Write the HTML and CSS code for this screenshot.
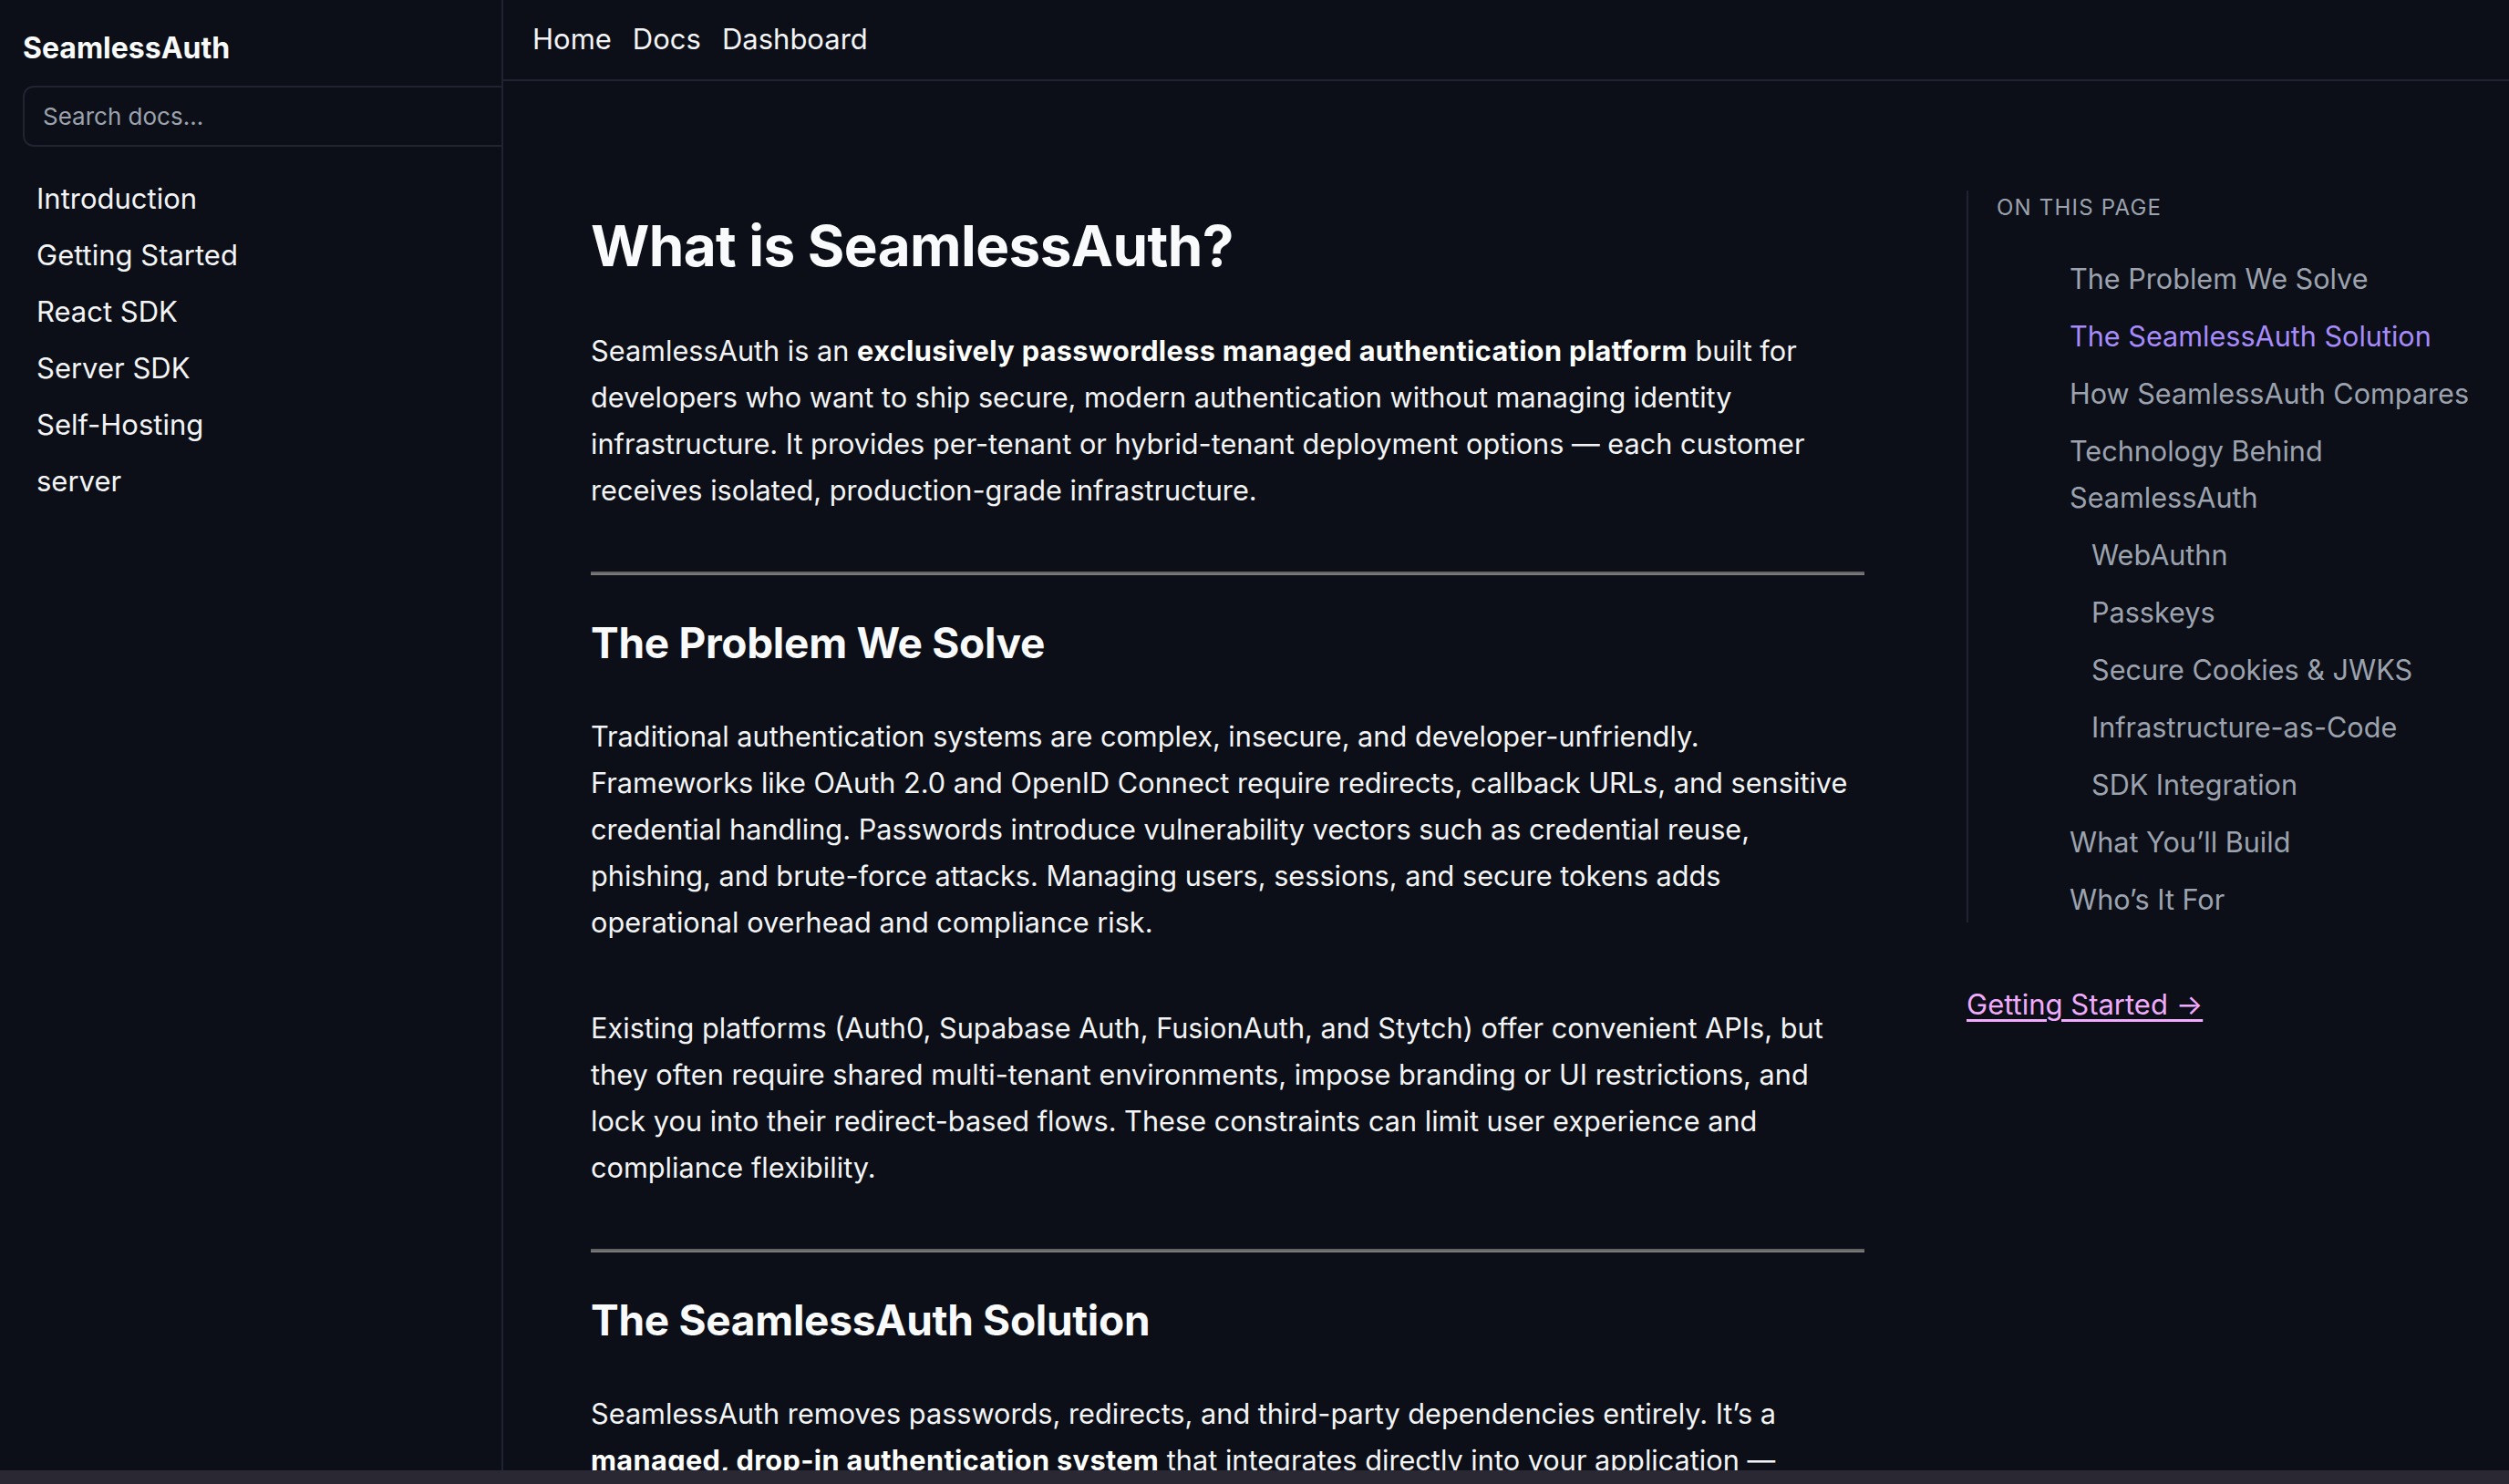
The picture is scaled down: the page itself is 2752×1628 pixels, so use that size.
FILE: index.html
```html
<!DOCTYPE html>
<html lang="en">
<head>
<meta charset="utf-8">
<title>What is SeamlessAuth? – Docs</title>
<link rel="stylesheet" href="styles.css">
</head>
<body>
<div class="app">
  <aside class="sidebar">
    <div class="brand">SeamlessAuth</div>
    <input class="search" type="text" placeholder="Search docs...">
    <nav class="side-nav">
      <a href="#">Introduction</a>
      <a href="#">Getting Started</a>
      <a href="#">React SDK</a>
      <a href="#">Server SDK</a>
      <a href="#">Self-Hosting</a>
      <a href="#">server</a>
    </nav>
  </aside>
  <div class="main">
    <header class="topbar">
      <a href="#">Home</a>
      <a href="#">Docs</a>
      <a href="#">Dashboard</a>
    </header>
    <div class="page">
      <article class="content">
        <h1>What is SeamlessAuth?</h1>
        <p>SeamlessAuth is an <strong>exclusively passwordless managed authentication platform</strong> built for developers who want to ship secure, modern authentication without managing identity infrastructure. It provides per-tenant or hybrid-tenant deployment options — each customer receives isolated, production-grade infrastructure.</p>
        <hr>
        <h2>The Problem We Solve</h2>
        <p>Traditional authentication systems are complex, insecure, and developer-unfriendly. Frameworks like OAuth 2.0 and OpenID Connect require redirects, callback URLs, and sensitive credential handling. Passwords introduce vulnerability vectors such as credential reuse, phishing, and brute-force attacks. Managing users, sessions, and secure tokens adds operational overhead and compliance risk.</p>
        <p>Existing platforms (Auth0, Supabase Auth, FusionAuth, and Stytch) offer convenient APIs, but they often require shared multi-tenant environments, impose branding or UI restrictions, and lock you into their redirect-based flows. These constraints can limit user experience and compliance flexibility.</p>
        <hr>
        <h2>The SeamlessAuth Solution</h2>
        <p>SeamlessAuth removes passwords, redirects, and third-party dependencies entirely. It’s a <strong>managed, drop-in authentication system</strong> that integrates directly into your application — without hosted login pages, redirects, or passwords to manage.</p>
      </article>
      <aside class="toc">
        <div class="toc-box">
          <div class="toc-title">ON THIS PAGE</div>
          <ul class="toc-list">
            <li><a href="#">The Problem We Solve</a></li>
            <li><a href="#" class="active">The SeamlessAuth Solution</a></li>
            <li><a href="#">How SeamlessAuth Compares</a></li>
            <li><a href="#">Technology Behind SeamlessAuth</a></li>
            <li class="sub"><a href="#">WebAuthn</a></li>
            <li class="sub"><a href="#">Passkeys</a></li>
            <li class="sub"><a href="#">Secure Cookies &amp; JWKS</a></li>
            <li class="sub"><a href="#">Infrastructure-as-Code</a></li>
            <li class="sub"><a href="#">SDK Integration</a></li>
            <li><a href="#">What You’ll Build</a></li>
            <li><a href="#">Who’s It For</a></li>
          </ul>
        </div>
        <a href="#" class="next-link">Getting Started →</a>
      </aside>
    </div>
  </div>
</div>
<div class="hscroll"></div>
</body>
</html>
```
FILE: styles.css
```css
* { box-sizing: border-box; }
html, body {
  margin: 0;
  padding: 0;
  background: #0c0f17;
  color: #f3f4f6;
  font-family: Inter, "Noto Sans", sans-serif;
  overflow: hidden;
}
a { color: inherit; text-decoration: none; }

.app {
  display: flex;
  height: 1613px;
  overflow: hidden;
}

.sidebar {
  width: 552px;
  flex: none;
  border-right: 2px solid #1f2430;
  padding: 31px 0 0 25px;
  overflow: hidden;
}
.brand {
  font-size: 32px;
  font-weight: 700;
  line-height: 44px;
  color: #f9fafb;
}
.search {
  display: block;
  margin-top: 19px;
  width: 560px;
  height: 67px;
  background: transparent;
  border: 2px solid #1f2430;
  border-radius: 12px;
  padding: 0 20px;
  font-family: Inter, "Noto Sans", sans-serif;
  font-size: 26px;
  color: #e5e7eb;
}
.search::placeholder { color: #9ca3af; }
.side-nav {
  display: flex;
  flex-direction: column;
  margin-top: 26px;
  padding-left: 15px;
}
.side-nav a {
  font-size: 31px;
  line-height: 62px;
  color: #f3f4f6;
}

.main {
  flex: 1;
  display: flex;
  flex-direction: column;
  min-width: 0;
}
.topbar {
  height: 89px;
  flex: none;
  display: flex;
  align-items: center;
  gap: 23px;
  padding: 0 0 2px 32px;
  border-bottom: 2px solid #1f2430;
}
.topbar a {
  font-size: 31px;
  color: #f3f4f6;
}

.page {
  display: flex;
  align-items: flex-start;
  padding: 120px 0 0 96px;
}
.content {
  width: 1397px;
  flex: none;
}
.content h1 {
  margin: 0;
  padding-top: 27px;
  font-size: 62px;
  line-height: 68px;
  font-weight: 700;
  letter-spacing: -0.6px;
  color: #f9fafb;
}
.content p {
  margin: 55px 0 0;
  font-size: 30.7px;
  line-height: 51px;
}
.content p + p { margin-top: 65px; }
.content strong { font-weight: 700; color: #ffffff; letter-spacing: 0.35px; }
.content hr {
  margin: 64px 0 0;
  border: none;
  border-top: 2px solid #636363;
  border-bottom: 2px solid #7a7a7a;
  height: 0;
}
.content h2 {
  margin: 45px 0 0;
  font-size: 46px;
  line-height: 58px;
  font-weight: 700;
  letter-spacing: -0.3px;
  color: #f9fafb;
}
.content h2 + p { margin-top: 48px; }

.toc {
  margin-left: 112px;
  width: 595px;
  flex: none;
}
.toc-box {
  border-left: 2px solid #1f2430;
  padding: 0 30px 0 31px;
}
.toc-title {
  font-size: 24px;
  line-height: 38px;
  letter-spacing: 1.2px;
  color: #9ca3af;
}
.toc-list {
  list-style: none;
  margin: 33px 0 0;
  padding: 0 0 0 80px;
}
.toc-list li {
  font-size: 30.6px;
  line-height: 51px;
  color: #9ca3af;
}
.toc-list li + li { margin-top: 12px; }
.toc-list li.sub { padding-left: 24px; }
.toc-list a.active { color: #a78bfa; }
.next-link {
  display: inline-block;
  margin-top: 64px;
  font-size: 31px;
  line-height: 51px;
  color: #f0abfc;
  text-decoration: underline;
  text-underline-offset: 5px;
}

.hscroll {
  height: 15px;
  background: #2a2933;
}
```
